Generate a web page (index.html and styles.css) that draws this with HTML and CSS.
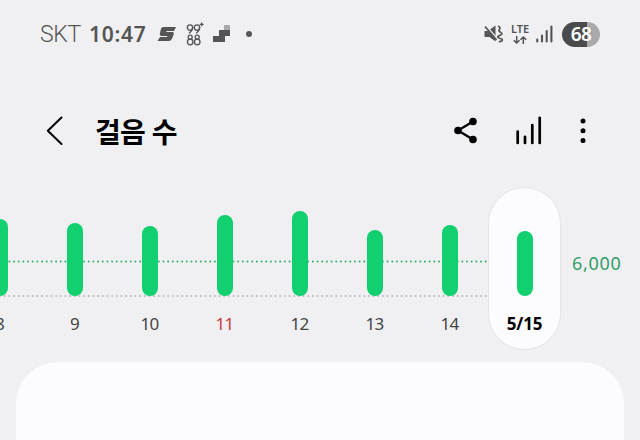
FILE: index.html
```
<!DOCTYPE html>
<html lang="ko">
<head>
    <meta charset="UTF-8">
    <meta name="viewport" content="width=device-width, initial-scale=1.0">
    <title>걸음 수</title>
    <link rel="stylesheet" href="styles.css">
</head>
<body>

<div class="status-bar">
    <span class="carrier">SKT</span>
    <span class="clock">10:47</span>
    <svg class="status-app" width="20" height="16" viewBox="0 0 20 16">
        <path d="M6 1H19L17 5H9.5L9.3 6H15.5Q17.5 6.3 16.5 9L15 12.5Q14.2 15 11.5 15H0.5L3 11H10L10.4 10H4.5Q2.3 9.7 3 7L3.8 3.5Q4.3 1.3 6 1Z" fill="#555"/>
    </svg>
    <svg class="status-count" width="19" height="25" viewBox="0 0 19 25" fill="none" stroke="#555" stroke-width="1.3" stroke-linecap="round">
        <circle cx="4" cy="5.6" r="2.7"/>
        <circle cx="11" cy="5.6" r="2.7"/>
        <path d="M6.7 5.8Q6.5 8.5 3.5 11M13.7 5.8Q13.5 8.5 10.5 11M14.2 2.3h3M15.7 0.8v3"/>
        <circle cx="4.2" cy="15.2" r="2"/>
        <circle cx="4.2" cy="20" r="2.8"/>
        <circle cx="11.2" cy="15.2" r="2"/>
        <circle cx="11.2" cy="20" r="2.8"/>
    </svg>
    <svg class="status-steps" width="18" height="18" viewBox="0 0 18 18">
        <path d="M0 11H6V5H17V11H12V17H0Z" fill="#555"/>
        <path d="M11 0H17V5H11Z" fill="#aaa"/>
    </svg>
    <span class="status-dot"></span>

    <div class="status-right">
        <svg width="19" height="20" viewBox="0 0 19 20">
            <path d="M0.5 7H4L11.5 1.5V17.5L5.5 13H0.5Z" fill="#555"/>
            <path d="M2 1.5L13 14.5" stroke="#f0f0f2" stroke-width="1.4"/>
            <path d="M1 2.5L12.5 16" stroke="#555" stroke-width="1.8"/>
            <path d="M14 2q3 1.5 1.5 3.2t1.3 3.2t-1.3 3.2t1.3 3.2t-2 3" fill="none" stroke="#555" stroke-width="1.7"/>
        </svg>
        <div class="network">
            <span>LTE</span>
            <svg width="14" height="8" viewBox="0 0 14 8" fill="none" stroke="#555" stroke-width="1.5">
                <path d="M3.7 0V7M0.8 4.2L3.7 7L6.6 4.2M10.3 8V1M7.4 3.8L10.3 1L13.2 3.8"/>
            </svg>
        </div>
        <svg class="signal" width="17" height="18" viewBox="0 0 17 18" stroke="#555" stroke-width="2.1" stroke-linecap="round">
            <path d="M1.2 14.5V16.5M6 10.5V16.5M10.7 6V16.5M15.4 1.5V16.5"/>
        </svg>
        <span class="battery">68</span>
    </div>
</div>

<header class="app-bar">
    <svg class="back" width="18" height="30" viewBox="0 0 18 30" fill="none" stroke="#000" stroke-width="2" stroke-linecap="round" stroke-linejoin="round">
        <path d="M15.5 1.5L1.8 14.8L15.5 28"/>
    </svg>
    <h1 class="title">걸음 수</h1>
    <div class="actions">
        <svg width="24" height="28" viewBox="0 0 24 28">
            <path d="M19 4.5L4 13.5L19 22.5" fill="none" stroke="#000" stroke-width="2.3"/>
            <circle cx="4" cy="13.5" r="3.8"/>
            <circle cx="19" cy="4.5" r="3.8"/>
            <circle cx="19" cy="22.5" r="3.8"/>
        </svg>
        <svg width="28" height="30" viewBox="0 0 28 30" stroke="#000" stroke-width="2.7" stroke-linecap="round">
            <path d="M2.7 15.5V27M10 20.8V27M17.3 9.2V27M24.7 1.8V27"/>
        </svg>
        <svg width="6" height="28" viewBox="0 0 6 28">
            <circle cx="3" cy="4" r="2.5"/>
            <circle cx="3" cy="13.7" r="2.5"/>
            <circle cx="3" cy="23.4" r="2.5"/>
        </svg>
    </div>
</header>

<main>
    <section class="chart">
        <svg class="guides" width="488" height="164" viewBox="0 0 488 164" fill="none" stroke-linecap="round">
            <path d="M0 74.5H488" stroke="#2fae70"/>
            <path d="M0 109H488" stroke="#bbbbbf"/>
        </svg>
        <div class="days">
            <div class="day"><span class="bar" style="height: 77px"></span><span class="label">8</span></div>
            <div class="day"><span class="bar" style="height: 73px"></span><span class="label">9</span></div>
            <div class="day"><span class="bar" style="height: 70px"></span><span class="label">10</span></div>
            <div class="day sunday"><span class="bar" style="height: 81px"></span><span class="label">11</span></div>
            <div class="day"><span class="bar" style="height: 85px"></span><span class="label">12</span></div>
            <div class="day"><span class="bar" style="height: 66px"></span><span class="label">13</span></div>
            <div class="day"><span class="bar" style="height: 71px"></span><span class="label">14</span></div>
            <div class="day selected"><span class="bar" style="height: 65px"></span><span class="label">5/15</span></div>
        </div>
        <span class="goal">6,000</span>
    </section>
    <section class="card"></section>
</main>

</body>
</html>
```
FILE: styles.css
```
body {
    margin: 0;
    height: 440px;
    overflow: hidden;
    background-color: #f0f0f2;
    color: #000;
    font-family: "Noto Sans", "Noto Sans CJK KR", sans-serif;
}

svg {
    display: block;
    flex: none;
}

.status-bar {
    display: flex;
    align-items: center;
    box-sizing: border-box;
    height: 68px;
    padding: 0 40px;
    color: #555;
}

.carrier {
    width: 49px;
    font-family: Roboto, sans-serif;
    font-size: 23px;
    font-weight: 300;
    letter-spacing: -0.3px;
}

.clock {
    width: 68px;
    font-size: 21px;
    font-weight: 600;
    letter-spacing: 0.7px;
}

.status-count {
    margin-left: 9px;
}

.status-steps {
    margin-left: 8px;
}

.status-dot {
    width: 6px;
    height: 6px;
    margin-left: 15px;
    border-radius: 50%;
    background-color: #555;
}

.status-right {
    display: flex;
    align-items: center;
    margin-left: auto;
}

.network {
    display: flex;
    flex-direction: column;
    align-items: center;
    gap: 2px;
    width: 20px;
    margin-left: 7px;
    font-size: 11px;
    font-weight: 600;
    line-height: 10px;
}

.signal {
    margin-left: 6px;
}

.battery {
    width: 38px;
    height: 25px;
    margin-left: 9px;
    border-radius: 13px;
    background: linear-gradient(to right, #4b4b4b 67%, #aaa 67%);
    color: #fff;
    font-size: 19px;
    font-weight: 600;
    line-height: 24px;
    letter-spacing: -0.5px;
    text-align: center;
}

.app-bar {
    display: flex;
    align-items: center;
    box-sizing: border-box;
    height: 119px;
    padding: 6px 54px 0 46px;
}

.title {
    margin: 2px 0 0 31px;
    font-size: 28px;
    font-weight: 700;
    line-height: 36px;
    letter-spacing: -0.7px;
}

.actions {
    display: flex;
    align-items: center;
    gap: 37px;
    margin-left: auto;
}

.chart {
    position: relative;
    display: flex;
    height: 163px;
}

/* dotted goal line and baseline, behind the bars */
.guides {
    position: absolute;
    top: 0;
    left: 0;
    stroke-width: 2px;
    stroke-dasharray: 0 4.67;
}

.days {
    display: flex;
    margin-left: -38px;
}

.day {
    position: relative;
    display: flex;
    flex-direction: column;
    align-items: center;
    justify-content: flex-end;
    box-sizing: border-box;
    width: 75px;
    padding-bottom: 14px;
}

.bar {
    width: 16px;
    border-radius: 8px;
    background-color: #12d070;
}

.label {
    margin-top: 16px;
    color: #444;
    font-size: 17px;
    line-height: 24px;
    letter-spacing: -0.7px;
}

.sunday .label {
    color: #c83c38;
}

.selected {
    width: 73px;
    margin-left: 1px;
    border: 1px solid #e4e4e7;
    border-radius: 37px;
    background-color: #fcfcfe;
    padding-bottom: 13px;
}

.selected .label {
    color: #000;
    font-weight: 700;
    letter-spacing: -0.2px;
}

.goal {
    align-self: flex-start;
    margin: 64px 0 0 11px;
    color: #319e69;
    font-size: 18px;
    line-height: 24px;
    letter-spacing: 0.7px;
}

.card {
    height: 78px;
    margin: 12px 16px 0;
    border-radius: 42px 42px 0 0;
    background-color: #fcfcfe;
}
```
